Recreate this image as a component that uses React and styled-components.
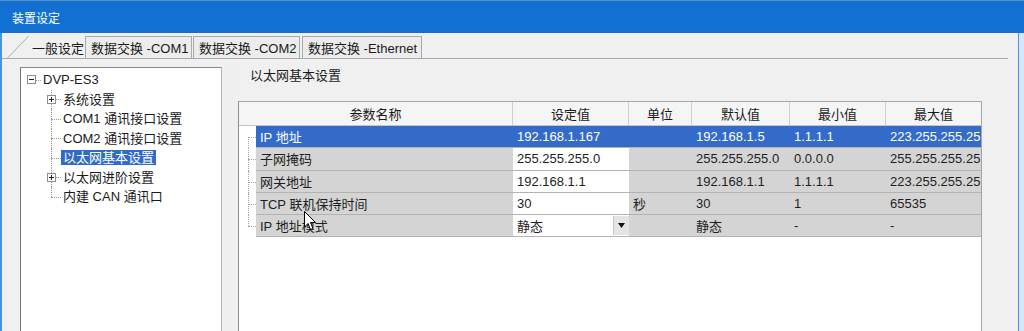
import React from 'react';
import styled, {createGlobalStyle, css} from 'styled-components';

const GlobalStyle = createGlobalStyle`
    html, body {
        margin: 0;
        padding: 0;
        overflow: hidden;
        background: #f0f0f0;
    }
    body {
        font-family: "Liberation Sans", "Noto Sans CJK SC", sans-serif;
        font-size: 13px;
        color: #1a1a1a;
    }
`;

const COLUMNS = '17px 257px 116px 63px 98px 96px 95px';

const Window = styled.div`
    position: relative;
    width: 1024px;
    height: 331px;
    display: flex;
    flex-direction: column;
    overflow: hidden;
`;

const TitleBar = styled.div`
    height: 33px;
    flex: none;
    display: flex;
    align-items: center;
    padding-left: 12px;
    background: #1170d2;
    border-top: 1px solid #5a8fc8;
    box-sizing: border-box;
    color: #fff;
    font-size: 12px;
`;

const Body = styled.div`
    flex: 1;
    min-height: 0;
    display: flex;
    border-left: 2px solid #4a93e2;
`;

const Main = styled.div`
    flex: 1;
    min-width: 0;
    display: flex;
    flex-direction: column;
    background: #f0f0f0;
`;

const RightEdge = styled.div`
    width: 5px;
    flex: none;
    border-left: 1px solid #4a93e2;
    background: #d8e7f7;
`;

const TabStrip = styled.div`
    height: 25px;
    flex: none;
    display: flex;
    align-items: flex-end;
    padding-left: 5px;
    margin-right: 10px;
    border-bottom: 1px solid #a9a9a9;
`;

const Tab = styled.div`
    position: relative;
    height: 22px;
    box-sizing: border-box;
    display: flex;
    align-items: center;
    white-space: nowrap;
    ${(p) => p.$active ? css`
        width: 78px;
        padding-left: 25px;
        &::before {
            content: '';
            position: absolute;
            left: 0;
            bottom: 0;
            height: 22px;
            border-left: 1px solid #a9a9a9;
            transform-origin: bottom left;
            transform: skewX(-44deg);
        }
    ` : css`
        width: ${p.$width}px;
        margin-left: ${p.$gap}px;
        padding-left: 5px;
        background: #ececec;
        border: 1px solid #a9a9a9;
        border-bottom: none;
    `}
`;

const TabPage = styled.div`
    flex: 1;
    min-height: 0;
    display: flex;
    padding-top: 8px;
`;

const TreePanel = styled.div`
    width: 202px;
    flex: none;
    margin-left: 18px;
    box-sizing: border-box;
    padding-top: 2px;
    background: #fff;
    border: 1px solid #b4b4b4;
    border-left-color: #767676;
    border-top-color: #8a8a8a;
    border-bottom: none;
`;

const TreeItem = styled.div`
    position: relative;
    height: 19.5px;
    display: flex;
    align-items: center;
    padding-left: ${(p) => p.$depth === 0 ? 6 : 26}px;
    white-space: nowrap;
    &::after {
        content: '';
        position: absolute;
        left: ${(p) => p.$depth === 0 ? 10 : 30}px;
        width: 10px;
        top: 50%;
        border-top: 1px dotted #9a9a9a;
    }
    ${(p) => p.$depth > 0 && css`
        &::before {
            content: '';
            position: absolute;
            left: 30px;
            top: 0;
            height: ${p.$last ? '50%' : '100%'};
            border-left: 1px dotted #9a9a9a;
        }
    `}
`;

const Toggle = styled.span`
    position: relative;
    z-index: 1;
    width: 9px;
    height: 9px;
    flex: none;
    margin-right: 5px;
    box-sizing: border-box;
    ${(p) => p.$kind && css`
        border: 1px solid #8e8e8e;
        background: #fff;
        &::before {
            content: '';
            position: absolute;
            left: 1px;
            top: 3px;
            width: 5px;
            border-top: 1px solid #222;
        }
    `}
    ${(p) => p.$kind === 'plus' && css`
        &::after {
            content: '';
            position: absolute;
            left: 3px;
            top: 1px;
            height: 5px;
            border-left: 1px solid #222;
        }
    `}
`;

const TreeLabel = styled.span`
    position: relative;
    z-index: 1;
    padding: 0 2px;
    line-height: 15px;
    ${(p) => p.$selected ? css`
        background: #2f6cc6;
        color: #fff;
    ` : css`
        background: #fff;
    `}
`;

const Splitter = styled.div`
    width: 16px;
    flex: none;
    background: #efefef;
`;

const Content = styled.div`
    flex: 1;
    min-width: 0;
    display: flex;
    flex-direction: column;
`;

const SectionTitle = styled.div`
    height: 18px;
    line-height: 18px;
    padding-left: 12px;
    margin-bottom: 16px;
`;

const Table = styled.div`
    width: 744px;
    flex: 1;
    box-sizing: border-box;
    background: #fff;
    border: 1px solid #a6a6a6;
    border-left-color: #8c8c8c;
    border-bottom: none;
`;

const HeaderRow = styled.div`
    display: grid;
    grid-template-columns: 274px 116px 63px 98px 96px 95px;
    height: 23px;
    background: #f5f5f5;
    border-bottom: 1px solid #c4c4c4;
`;

const HeaderCell = styled.div`
    display: flex;
    align-items: center;
    justify-content: center;
    border-right: 1px solid #cfcfcf;
    &:last-child {
        border-right: none;
    }
`;

const Row = styled.div`
    display: grid;
    grid-template-columns: ${COLUMNS};
    height: 22.3px;
`;

const Gutter = styled.div`
    position: relative;
    background: #fff;
    &::before {
        content: '';
        position: absolute;
        left: 9px;
        top: ${(p) => p.$first ? '50%' : '0'};
        bottom: ${(p) => p.$last ? '50%' : '0'};
        border-left: 1px dotted #a8a8a8;
    }
    &::after {
        content: '';
        position: absolute;
        left: 9px;
        right: 0;
        top: 50%;
        border-top: 1px dotted #a8a8a8;
    }
`;

const Cell = styled.div`
    display: flex;
    align-items: center;
    padding-left: 4px;
    box-sizing: border-box;
    overflow: hidden;
    white-space: nowrap;
    border-bottom: 1px solid #b3b3b3;
    ${(p) => p.$selected ? css`
        background: #346bcb;
        color: #fff;
    ` : css`
        background: ${p.$edit ? '#fff' : '#d4d4d4'};
        color: #1e1e1e;
    `}
`;

const DropButton = styled.span`
    margin-left: auto;
    width: 15px;
    height: 19px;
    display: flex;
    align-items: center;
    justify-content: center;
    background: #e4e4e4;
    border-left: 1px solid #c8c8c8;
`;

const Cursor = styled.svg`
    position: absolute;
    left: 304px;
    top: 211px;
    z-index: 5;
`;

const TABS = [
    {label: '数据交换 -COM1', width: 107, gap: 0},
    {label: '数据交换 -COM2', width: 107, gap: 1},
    {label: '数据交换 -Ethernet', width: 120, gap: 2},
];

const TREE = [
    {label: 'DVP-ES3', depth: 0, toggle: 'minus'},
    {label: '系统设置', depth: 1, toggle: 'plus'},
    {label: 'COM1 通讯接口设置', depth: 1},
    {label: 'COM2 通讯接口设置', depth: 1},
    {label: '以太网基本设置', depth: 1, selected: true},
    {label: '以太网进阶设置', depth: 1, toggle: 'plus'},
    {label: '内建 CAN 通讯口', depth: 1, last: true},
];

const HEADERS = ['参数名称', '设定值', '单位', '默认值', '最小值', '最大值'];

// the last column is too narrow for the full maximum, it shows what fits
const ROWS = [
    {name: 'IP 地址', value: '192.168.1.167', unit: '', def: '192.168.1.5', min: '1.1.1.1', max: '223.255.255.25', selected: true},
    {name: '子网掩码', value: '255.255.255.0', unit: '', def: '255.255.255.0', min: '0.0.0.0', max: '255.255.255.25'},
    {name: '网关地址', value: '192.168.1.1', unit: '', def: '192.168.1.1', min: '1.1.1.1', max: '223.255.255.25'},
    {name: 'TCP 联机保持时间', value: '30', unit: '秒', def: '30', min: '1', max: '65535'},
    {name: 'IP 地址模式', value: '静态', unit: '', def: '静态', min: '-', max: '-', combo: true},
];

function ParamRow({row, index, count}) {
    const sel = row.selected;
    return (
        <Row>
            <Gutter $first={index === 0} $last={index === count - 1} />
            <Cell $selected={sel}>{row.name}</Cell>
            <Cell $selected={sel} $edit>
                {row.value}
                {row.combo && (
                    <DropButton>
                        <svg width='7' height='5' viewBox='0 0 7 5'>
                            <path d='M0 0 L7 0 L3.5 5 Z' fill='#111' />
                        </svg>
                    </DropButton>
                )}
            </Cell>
            <Cell $selected={sel}>{row.unit}</Cell>
            <Cell $selected={sel}>{row.def}</Cell>
            <Cell $selected={sel}>{row.min}</Cell>
            <Cell $selected={sel}>{row.max}</Cell>
        </Row>
    );
}

export default function App() {
    return (
        <Window>
            <GlobalStyle />
            <TitleBar>装置设定</TitleBar>
            <Body>
                <Main>
                    <TabStrip>
                        <Tab $active>一般设定</Tab>
                        {TABS.map((t) => (
                            <Tab key={t.label} $width={t.width} $gap={t.gap}>{t.label}</Tab>
                        ))}
                    </TabStrip>
                    <TabPage>
                        <TreePanel>
                            {TREE.map((item) => (
                                <TreeItem key={item.label} $depth={item.depth} $last={item.last}>
                                    <Toggle $kind={item.toggle} />
                                    <TreeLabel $selected={item.selected}>{item.label}</TreeLabel>
                                </TreeItem>
                            ))}
                        </TreePanel>
                        <Splitter />
                        <Content>
                            <SectionTitle>以太网基本设置</SectionTitle>
                            <Table>
                                <HeaderRow>
                                    {HEADERS.map((h) => <HeaderCell key={h}>{h}</HeaderCell>)}
                                </HeaderRow>
                                {ROWS.map((row, i) => (
                                    <ParamRow key={row.name} row={row} index={i} count={ROWS.length} />
                                ))}
                            </Table>
                        </Content>
                    </TabPage>
                </Main>
                <RightEdge />
            </Body>
            <Cursor width='13' height='20' viewBox='0 0 13 20'>
                <path d='M0.5 0.5 L0.5 16 L4 12.5 L6.5 18.5 L9 17.5 L6.5 11.5 L11.5 11.5 Z'
                    fill='#fff' stroke='#000' strokeWidth='1' strokeLinejoin='round' />
            </Cursor>
        </Window>
    );
}
